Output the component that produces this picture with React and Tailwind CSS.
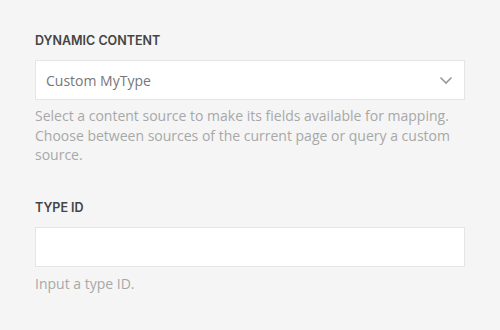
export default function App() {
  return (
    <div className="w-[500px] h-[330px] bg-[#f5f5f5] overflow-hidden flex" style={{ fontFamily: '"Open Sans", sans-serif' }}>
      <div className="flex-1 pl-[35px] pr-[35px] pt-[33px]">
        <div className="text-[12.5px] font-semibold uppercase text-[#444] leading-[16px]" style={{ fontFamily: 'Inter, sans-serif' }}>
          Dynamic Content
        </div>
        <div className="mt-[11px] h-[40px] bg-white border border-[#e5e5e5] flex items-center pl-[10px] pr-[11px]">
          <span className="flex-1 text-[14px] text-[#777]">Custom MyType</span>
          <svg width="14" height="9" viewBox="0 0 14 9" fill="none">
            <path d="M1.5 1.5l5.5 5.5 5.5-5.5" stroke="#999" strokeWidth="1.6" />
          </svg>
        </div>
        <p className="mt-[6px] text-[14px] leading-[19.5px] text-[#a8a8a8]">
          Select a content source to make its fields available for mapping. Choose between sources of the current page or query a custom source.
        </p>
        <div className="mt-[35px] text-[12.5px] font-semibold uppercase text-[#444] leading-[16px]" style={{ fontFamily: 'Inter, sans-serif' }}>
          Type ID
        </div>
        <div className="mt-[11px] h-[40px] bg-white border border-[#e5e5e5]" />
        <p className="mt-[7px] text-[14px] leading-[19.5px] text-[#a8a8a8]">Input a type ID.</p>
      </div>
    </div>
  );
}
